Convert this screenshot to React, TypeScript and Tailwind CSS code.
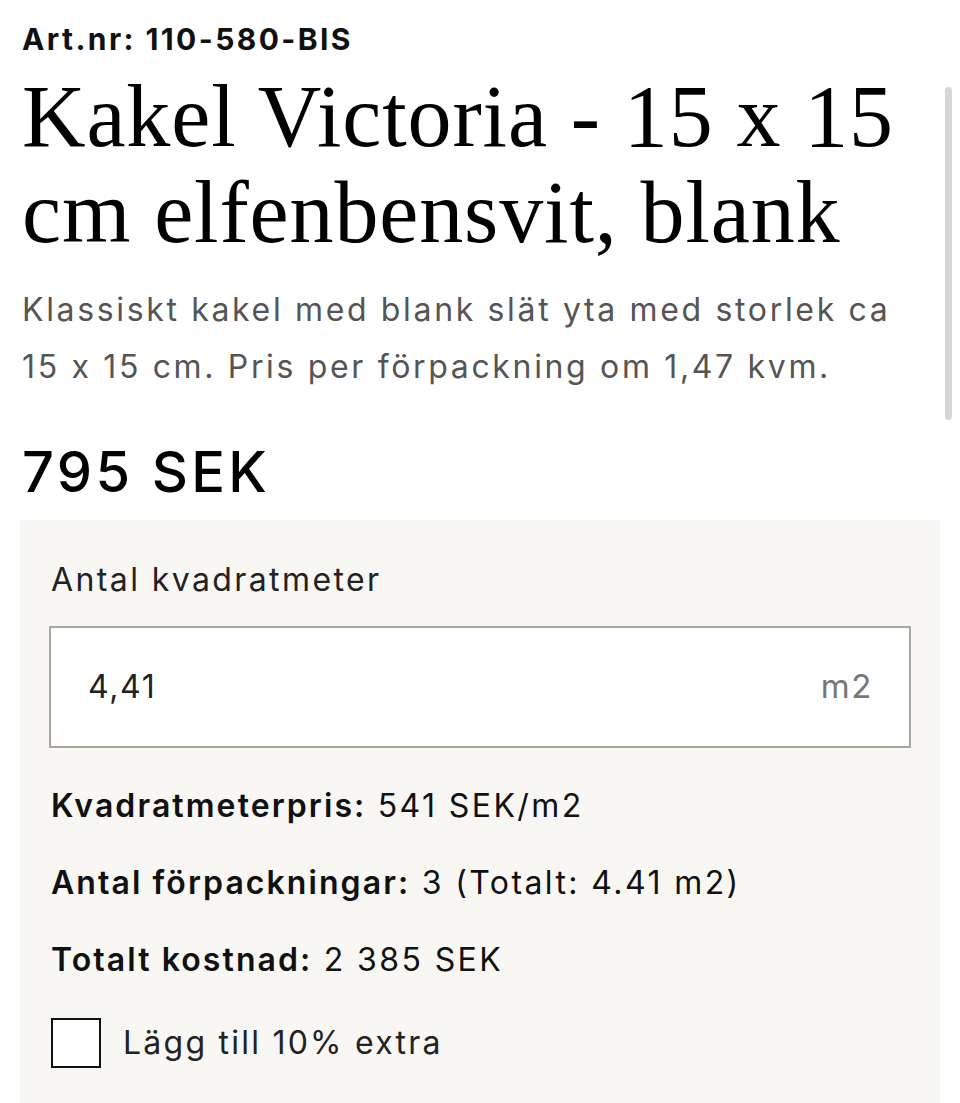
import React from "react";

const sans = { fontFamily: "Inter, 'Noto Sans', sans-serif" };

export default function App() {
  return (
    <div
      className="relative w-[960px] h-[1103px] overflow-hidden bg-white text-[#111] [font-feature-settings:'calt'_0]"
      style={sans}
    >
      <div className="absolute right-[8px] top-[87px] w-[7px] h-[333px] rounded-full bg-[#d6d6d6]" />
      <div className="pl-[22px] pr-[20px] pt-[21px]">
        <div className="text-[30px] leading-[36px] font-bold tracking-[0.08em] text-[#111]">
          Art.nr: 110-580-BIS
        </div>
        <h1
          className="mt-[12px] whitespace-nowrap text-[88px] leading-[96px] font-normal tracking-[0.01em] text-black"
          style={{ fontFamily: "'Liberation Serif', 'DejaVu Serif', serif" }}
        >
          Kakel Victoria - 15 x 15
          <br />
          cm elfenbensvit, blank
        </h1>
        <p className="mt-[20px] whitespace-nowrap text-[32px] leading-[57px] tracking-[0.083em] text-[#555]">
          Klassiskt kakel med blank slät yta med storlek ca
          <br />
          15 x 15 cm. Pris per förpackning om 1,47 kvm.
        </p>
        <div className="mt-[45px] text-[56px] leading-[64px] font-medium tracking-[0.06em] text-black">
          795 SEK
        </div>
      </div>
      <div className="mx-[20px] mt-[16px] bg-[#f8f7f4] px-[29px] pt-[40px] pb-[40px]">
        <div className="pl-[2px] text-[32px] leading-[40px] tracking-[0.075em] text-[#222]">
          Antal kvadratmeter
        </div>
        <div className="mt-[26px] h-[122px] border-2 border-[#aaa59f] bg-white flex items-center justify-between pl-[37px] pr-[36px]">
          <span className="text-[32px] tracking-[0.05em] text-[#222]">4,41</span>
          <span className="text-[33px] tracking-[0.05em] text-[#777]">m2</span>
        </div>
        <div className="mt-[38px] flex flex-col gap-[37px] pl-[2px] text-[32px] leading-[40px] tracking-[0.075em] text-[#111]">
          <div>
            <span className="font-semibold tracking-[0.065em]">Kvadratmeterpris:</span> 541 SEK/m2
          </div>
          <div>
            <span className="font-semibold tracking-[0.065em]">Antal förpackningar:</span> 3 (Totalt: 4.41 m2)
          </div>
          <div>
            <span className="font-semibold tracking-[0.065em]">Totalt kostnad:</span> 2 385 SEK
          </div>
        </div>
        <div className="mt-[38px] flex items-center gap-[22px] pl-[2px]">
          <div className="w-[50px] h-[50px] border-2 border-[#111] bg-white" />
          <span className="text-[32px] leading-[40px] tracking-[0.07em] text-[#222]">Lägg till 10% extra</span>
        </div>
      </div>
    </div>
  );
}
